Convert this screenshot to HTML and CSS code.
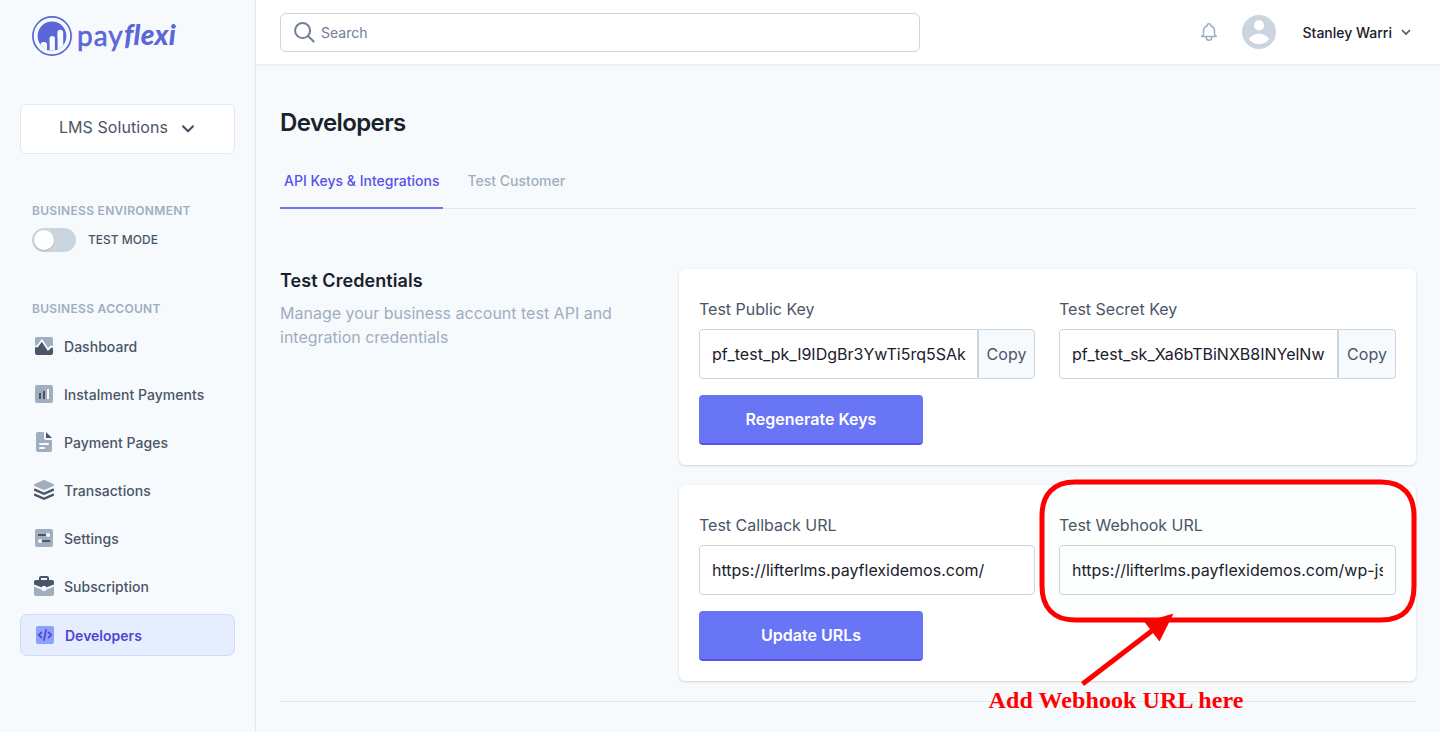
FILE: index.html
```html
<!DOCTYPE html>
<html lang="en">
<head>
<meta charset="utf-8">
<title>PayFlexi - Developers</title>
<link rel="stylesheet" href="styles.css">
</head>
<body>
<div class="app">
  <aside class="sidebar">
    <div class="logo">
      <svg class="logo-mark" viewBox="0 0 40 40">
        <defs><clipPath id="disc"><circle cx="20" cy="20" r="14.4"/></clipPath></defs>
        <circle cx="20" cy="20" r="19.1" fill="#f7fafc" stroke="#5a67d8" stroke-width="1.7"/>
        <g clip-path="url(#disc)">
          <rect width="40" height="40" fill="#5a67d8"/>
          <path d="M4 40V28.600H8.500a3.300 2.600 0 0 1 6.600 0V40zM17.500 40V22.600a2.700 2.700 0 0 1 5.400 0V40zM25.400 40V16.700a2.900 2.900 0 0 1 5.800 0V40z" fill="#f7fafc"/>
        </g>
        <path d="M16.200 27v7.200M24.200 22v12" stroke="#5a67d8" stroke-width="2.2"/>
      </svg>
      <span class="logo-pay">pay</span><span class="logo-flexi">flexi</span>
    </div>
    <button class="business">LMS Solutions
      <svg class="business-chevron" viewBox="0 0 12 8"><path d="M1 1.300l5 5 5-5" fill="none" stroke="currentColor" stroke-width="2.200" stroke-linecap="round" stroke-linejoin="round"/></svg>
    </button>
    <h3 class="side-title env-title">Business Environment</h3>
    <div class="mode"><span class="toggle"><span class="knob"></span></span><span class="mode-label">TEST MODE</span></div>
    <h3 class="side-title account-title">Business Account</h3>
    <nav class="nav">
      <a class="nav-item"><svg viewBox="0 0 24 24"><path class="light" d="M5 3h14a2 2 0 0 1 2 2v9h-3l-3 2-5-8-4 6H3V5a2 2 0 0 1 2-2z"/><path class="dark" d="M3 13h3l4-6 5 8 2 1 2-2h2v5a2 2 0 0 1-2 2H5a2 2 0 0 1-2-2z"/><path class="stroke-page" d="M3 12.300h2.300L9.900 6.300l6.100 9.300 2.400-2.900H21"/></svg>Dashboard</a>
      <a class="nav-item"><svg viewBox="0 0 24 24"><rect class="light" x="3" y="3" width="18" height="18" rx="2"/><path class="dark" d="M7 11h2v6H7zM11 9h2v8h-2z"/><path class="page" d="M15 7h2v10h-2z"/></svg>Instalment Payments</a>
      <a class="nav-item"><svg viewBox="0 0 24 24"><path class="light" d="M6 2h6v6c0 1.100.9 2 2 2h6v10a2 2 0 0 1-2 2H6a2 2 0 0 1-2-2V4c0-1.100.9-2 2-2zm2 11a1 1 0 0 0 0 2h8a1 1 0 0 0 0-2H8zm0 4a1 1 0 0 0 0 2h4a1 1 0 0 0 0-2H8z"/><path class="dark" d="M14 2l6 6h-6z"/></svg>Payment Pages</a>
      <a class="nav-item"><svg viewBox="0 0 24 24"><path class="light" d="M11.600 2.100a1 1 0 0 1 .8 0l9 4c.8.4.8 1.400 0 1.800l-9 4a1 1 0 0 1-.8 0l-9-4a1 1 0 0 1 0-1.800z"/><path class="dark" d="M2 11.100l1-.5 9 4 9-4 1 .5v1.600l-10 4.400-10-4.400zM2 16.100l1-.5 9 4 9-4 1 .5v1.600l-10 4.400-10-4.400z"/></svg>Transactions</a>
      <a class="nav-item"><svg viewBox="0 0 24 24"><rect class="light" x="3" y="3" width="18" height="18" rx="2"/><path class="dark" d="M6 8h8v2H6zM10 14h8v2h-8z"/><circle class="page" cx="16" cy="9" r="2"/><circle class="page" cx="8" cy="15" r="2"/></svg>Settings</a>
      <a class="nav-item"><svg viewBox="0 0 24 24"><path class="light" d="M14 15.700l8-3V20a2 2 0 0 1-2 2H4a2 2 0 0 1-2-2v-7.300l8 3v.3a1 1 0 0 0 1 1h2a1 1 0 0 0 1-1z"/><path class="dark" d="M7 6V4c0-1.100.9-2 2-2h6a2 2 0 0 1 2 2v2h3a2 2 0 0 1 2 2v2.600l-8 2.800V13a1 1 0 0 0-1-1h-2a1 1 0 0 0-1 1v.4l-8-2.800V8c0-1.100.9-2 2-2zm2 0h6V4H9z"/></svg>Subscription</a>
      <a class="nav-item active"><svg viewBox="0 0 24 24"><rect class="light" x="3" y="3" width="18" height="18" rx="2"/><path class="code" d="M8.500 9.300L5.800 12l2.700 2.700M15.500 9.300l2.700 2.700-2.700 2.700M13 6.800l-2 10.400"/></svg><span>Developers</span></a>
    </nav>
  </aside>
  <div class="content">
    <header class="topbar">
      <div class="search">
        <svg viewBox="0 0 22 22"><circle cx="8.600" cy="8.600" r="7.500"/><path d="M14 14l6.200 6"/></svg>Search
      </div>
      <div class="account">
        <svg class="bell" viewBox="0 0 24 24"><path d="M15 17h5l-1.400-1.400A2 2 0 0 1 18 14.200V11a6 6 0 0 0-4-5.700V5a2 2 0 1 0-4 0v.3A6 6 0 0 0 6 11v3.200c0 .5-.2 1-.6 1.400L4 17h5m6 0v1a3 3 0 1 1-6 0v-1m6 0H9"/></svg>
        <svg class="avatar" viewBox="0 0 34 34"><circle cx="17" cy="17" r="17" fill="#cbd5e0"/><circle cx="17" cy="10.400" r="5.100" fill="#fff"/><path d="M6.800 24.200C9 20.800 13.100 18.800 17 18.800s8 2 10.200 5.400A12.400 12.400 0 0 1 17 29a12.400 12.400 0 0 1-10.200-4.800z" fill="#fff"/></svg>
        <span class="user">Stanley Warri</span>
        <svg class="user-chevron" viewBox="0 0 10 7"><path d="M1 1l4 4 4-4"/></svg>
      </div>
    </header>
    <main class="main">
      <h1>Developers</h1>
      <div class="tabs"><a class="tab current">API Keys &amp; Integrations</a><a class="tab">Test Customer</a></div>
      <section class="credentials">
        <div class="intro">
          <h2>Test Credentials</h2>
          <p>Manage your business account test API and integration credentials</p>
        </div>
        <div class="cards">
          <div class="card">
            <div class="fields">
              <div class="field"><label>Test Public Key</label>
                <div class="key"><div class="input"><span>pf_test_pk_I9IDgBr3YwTi5rq5SAk</span></div><button class="copy copy-public">Copy</button></div></div>
              <div class="field"><label>Test Secret Key</label>
                <div class="key"><div class="input"><span>pf_test_sk_Xa6bTBiNXB8INYelNw</span></div><button class="copy">Copy</button></div></div>
            </div>
            <button class="primary">Regenerate Keys</button>
          </div>
          <div class="card">
            <div class="fields">
              <div class="field"><label>Test Callback URL</label><div class="input"><span>https://lifterlms.payflexidemos.com/</span></div></div>
              <div class="field"><label>Test Webhook URL</label><div class="input"><span>https://lifterlms.payflexidemos.com/wp-js</span></div></div>
            </div>
            <button class="primary">Update URLs</button>
          </div>
        </div>
      </section>
    </main>
  </div>
</div>
<svg class="annotation" width="470" height="262" viewBox="970 470 470 262">
  <path d="M1075 482H1381C1404 482 1414 496 1414 516V586C1414 608 1404 620 1381 620H1075C1053 620 1042 607 1042 586V516C1042 495 1053 482 1075 482Z" fill="#00ff40" fill-opacity=".01" stroke="#f00" stroke-width="5"/>
  <path d="M1082.500 684L1153 630" stroke="#f00" stroke-width="5"/>
  <path d="M1173.500 613.500L1144.500 622 1159.500 641.500Z" fill="#f00"/>
  <text x="988.500" y="707.500" class="note" textLength="255">Add Webhook URL here</text>
</svg>
</body>
</html>
```

FILE: styles.css
```css
* { box-sizing: border-box; }
body { margin: 0; overflow: hidden; background: #f7fafc; color: #1a202c; font-family: Inter, "Liberation Sans", sans-serif; font-size: 16px; line-height: 24px; }
h1, h2, h3, p { margin: 0; }
button { font: inherit; border: 0; margin: 0; }
svg { display: block; flex: none; }
.app { display: flex; height: 732px; }

.sidebar { width: 256px; flex: none; border-right: 1px solid #e2e8f0; padding: 16px 20px 0; }
.logo { display: flex; height: 40px; margin-left: 12px; color: #5a67d8; font-family: Lato, sans-serif; font-size: 28px; line-height: 38px; }
.logo-mark { width: 40px; height: 40px; margin-right: 5px; }
.logo-pay { width: 47px; letter-spacing: 1px; -webkit-text-stroke: .6px #5a67d8; }
.logo-flexi { font-weight: 900; font-style: italic; font-size: 28px; line-height: 36px; letter-spacing: .2px; }
.business { display: flex; align-items: center; justify-content: center; gap: 14px; width: 215px; height: 50px; margin-top: 48px; padding: 0 2px 5px 0; background: #fff; border: 1px solid #e2e8f0; border-radius: 6px; color: #4a5568; letter-spacing: .08px; }
.business-chevron { width: 12px; height: 8px; margin-top: 4px; }
.side-title { margin-left: 12px; color: #a0aec0; font-size: 12px; line-height: 18px; font-weight: 600; letter-spacing: .3px; text-transform: uppercase; }
.env-title { margin-top: 48px; }
.mode { display: flex; align-items: center; gap: 12px; margin: 8px 0 0 12px; height: 24px; }
.toggle { width: 44px; height: 24px; padding: 2px; border-radius: 12px; background: #cbd5e0; }
.knob { display: block; width: 20px; height: 20px; border-radius: 50%; background: #fff; box-shadow: 0 1px 2px rgba(0,0,0,.15); }
.mode-label { color: #4a5568; font-size: 12px; font-weight: 500; }
.account-title { margin-top: 48px; }
.nav { margin-top: 8px; }
.nav-item { display: flex; align-items: center; gap: 8px; height: 42px; margin-bottom: 6px; padding-left: 12px; color: #4a5568; font-size: 14px; font-weight: 500; letter-spacing: .03px; }
.nav-item svg { width: 24px; height: 24px; margin-bottom: 2px; }
.light { fill: #a0aec0; }
.dark { fill: #4a5568; }
.page { fill: #f7fafc; }
.stroke-page { fill: none; stroke: #f7fafc; stroke-width: 1.8; }
.active { border: 1px solid #cddbfe; border-radius: 7px; background: #e5edff; color: #5145cd; font-weight: 600; letter-spacing: 0; }
.active svg { margin-bottom: 0; }
.active span { padding-top: 2px; }
.active .light { fill: #8da2fb; }
.code { fill: none; stroke: #5145cd; stroke-width: 1.7; stroke-linecap: round; }

.content { flex: 1; min-width: 0; }
.topbar { display: flex; justify-content: space-between; height: 66px; padding: 13px 29px 0 24px; border-bottom: 2px solid #edf2f7; background: #fff; }
.search { display: flex; align-items: center; gap: 5px; width: 640px; height: 39px; padding: 1px 13px 0; border: 1px solid #cbd5e0; border-radius: 6px; color: #718096; font-size: 14px; }
.search svg { width: 22px; height: 22px; margin-top: -1px; fill: none; stroke: #718096; stroke-width: 2; }
.account { display: flex; align-items: center; height: 38px; }
.bell { width: 22px; height: 22px; fill: none; stroke: #a0aec0; stroke-width: 1.7; stroke-linejoin: round; }
.avatar { width: 34px; height: 34px; margin-left: 22px; }
.user { margin: 2px 9px 0 27px; font-size: 14px; font-weight: 500; }
.user-chevron { width: 10px; height: 7px; fill: none; stroke: #4a5568; stroke-width: 1.6; }

.main { padding: 41px 24px 0; }
h1 { font-size: 24px; line-height: 32px; font-weight: 600; letter-spacing: -.6px; }
.tabs { display: flex; gap: 20px; height: 41px; margin-top: 29px; border-bottom: 1px solid #e2e8f0; }
.tab { height: 41px; padding: 1px 4px 0; color: #a0aec0; font-size: 14px; line-height: 24px; font-weight: 500; }
.current { border-bottom: 2px solid #6875f5; color: #5850ec; }
.credentials { display: flex; margin-top: 60px; padding-bottom: 20px; border-bottom: 1px solid #e2e8f0; }
.intro { width: 399px; flex: none; padding-right: 40px; }
.intro h2 { font-size: 18px; line-height: 24px; font-weight: 600; letter-spacing: .08px; }
.intro p { margin-top: 8px; color: #a0aec0; }
.cards { display: grid; gap: 20px; flex: 1; }
.card { height: 196px; padding: 28px 20px 0; border-radius: 6px; background: #fff; box-shadow: 0 1px 3px rgba(0,0,0,.1), 0 1px 2px rgba(0,0,0,.06); }
.fields { display: grid; grid-template-columns: 336px 337px; gap: 24px; }
label { display: block; color: #4a5568; }
.input { flex: 1; height: 50px; margin-top: 8px; padding: 12px; border: 1px solid #cbd5e0; border-radius: 4px; }
.input span { display: block; overflow: hidden; white-space: nowrap; }
.key { display: flex; }
.key .input { min-width: 0; padding-right: 0; border-radius: 4px 0 0 4px; }
.copy { width: 58px; height: 50px; margin-top: 8px; padding: 0; border: 1px solid #cbd5e0; border-radius: 0 4px 4px 0; background: #f7fafc; color: #4a5568; }
.copy-public { width: 57px; }
.primary { width: 224px; height: 50px; margin-top: 16px; border-bottom: 2px solid #5850ec; border-radius: 4px; background: #6875f5; color: #fff; font-weight: 600; }

.annotation { position: absolute; left: 970px; top: 470px; }
.note { fill: #f00; font-family: "Liberation Serif", serif; font-size: 24px; font-weight: 700; }
```
